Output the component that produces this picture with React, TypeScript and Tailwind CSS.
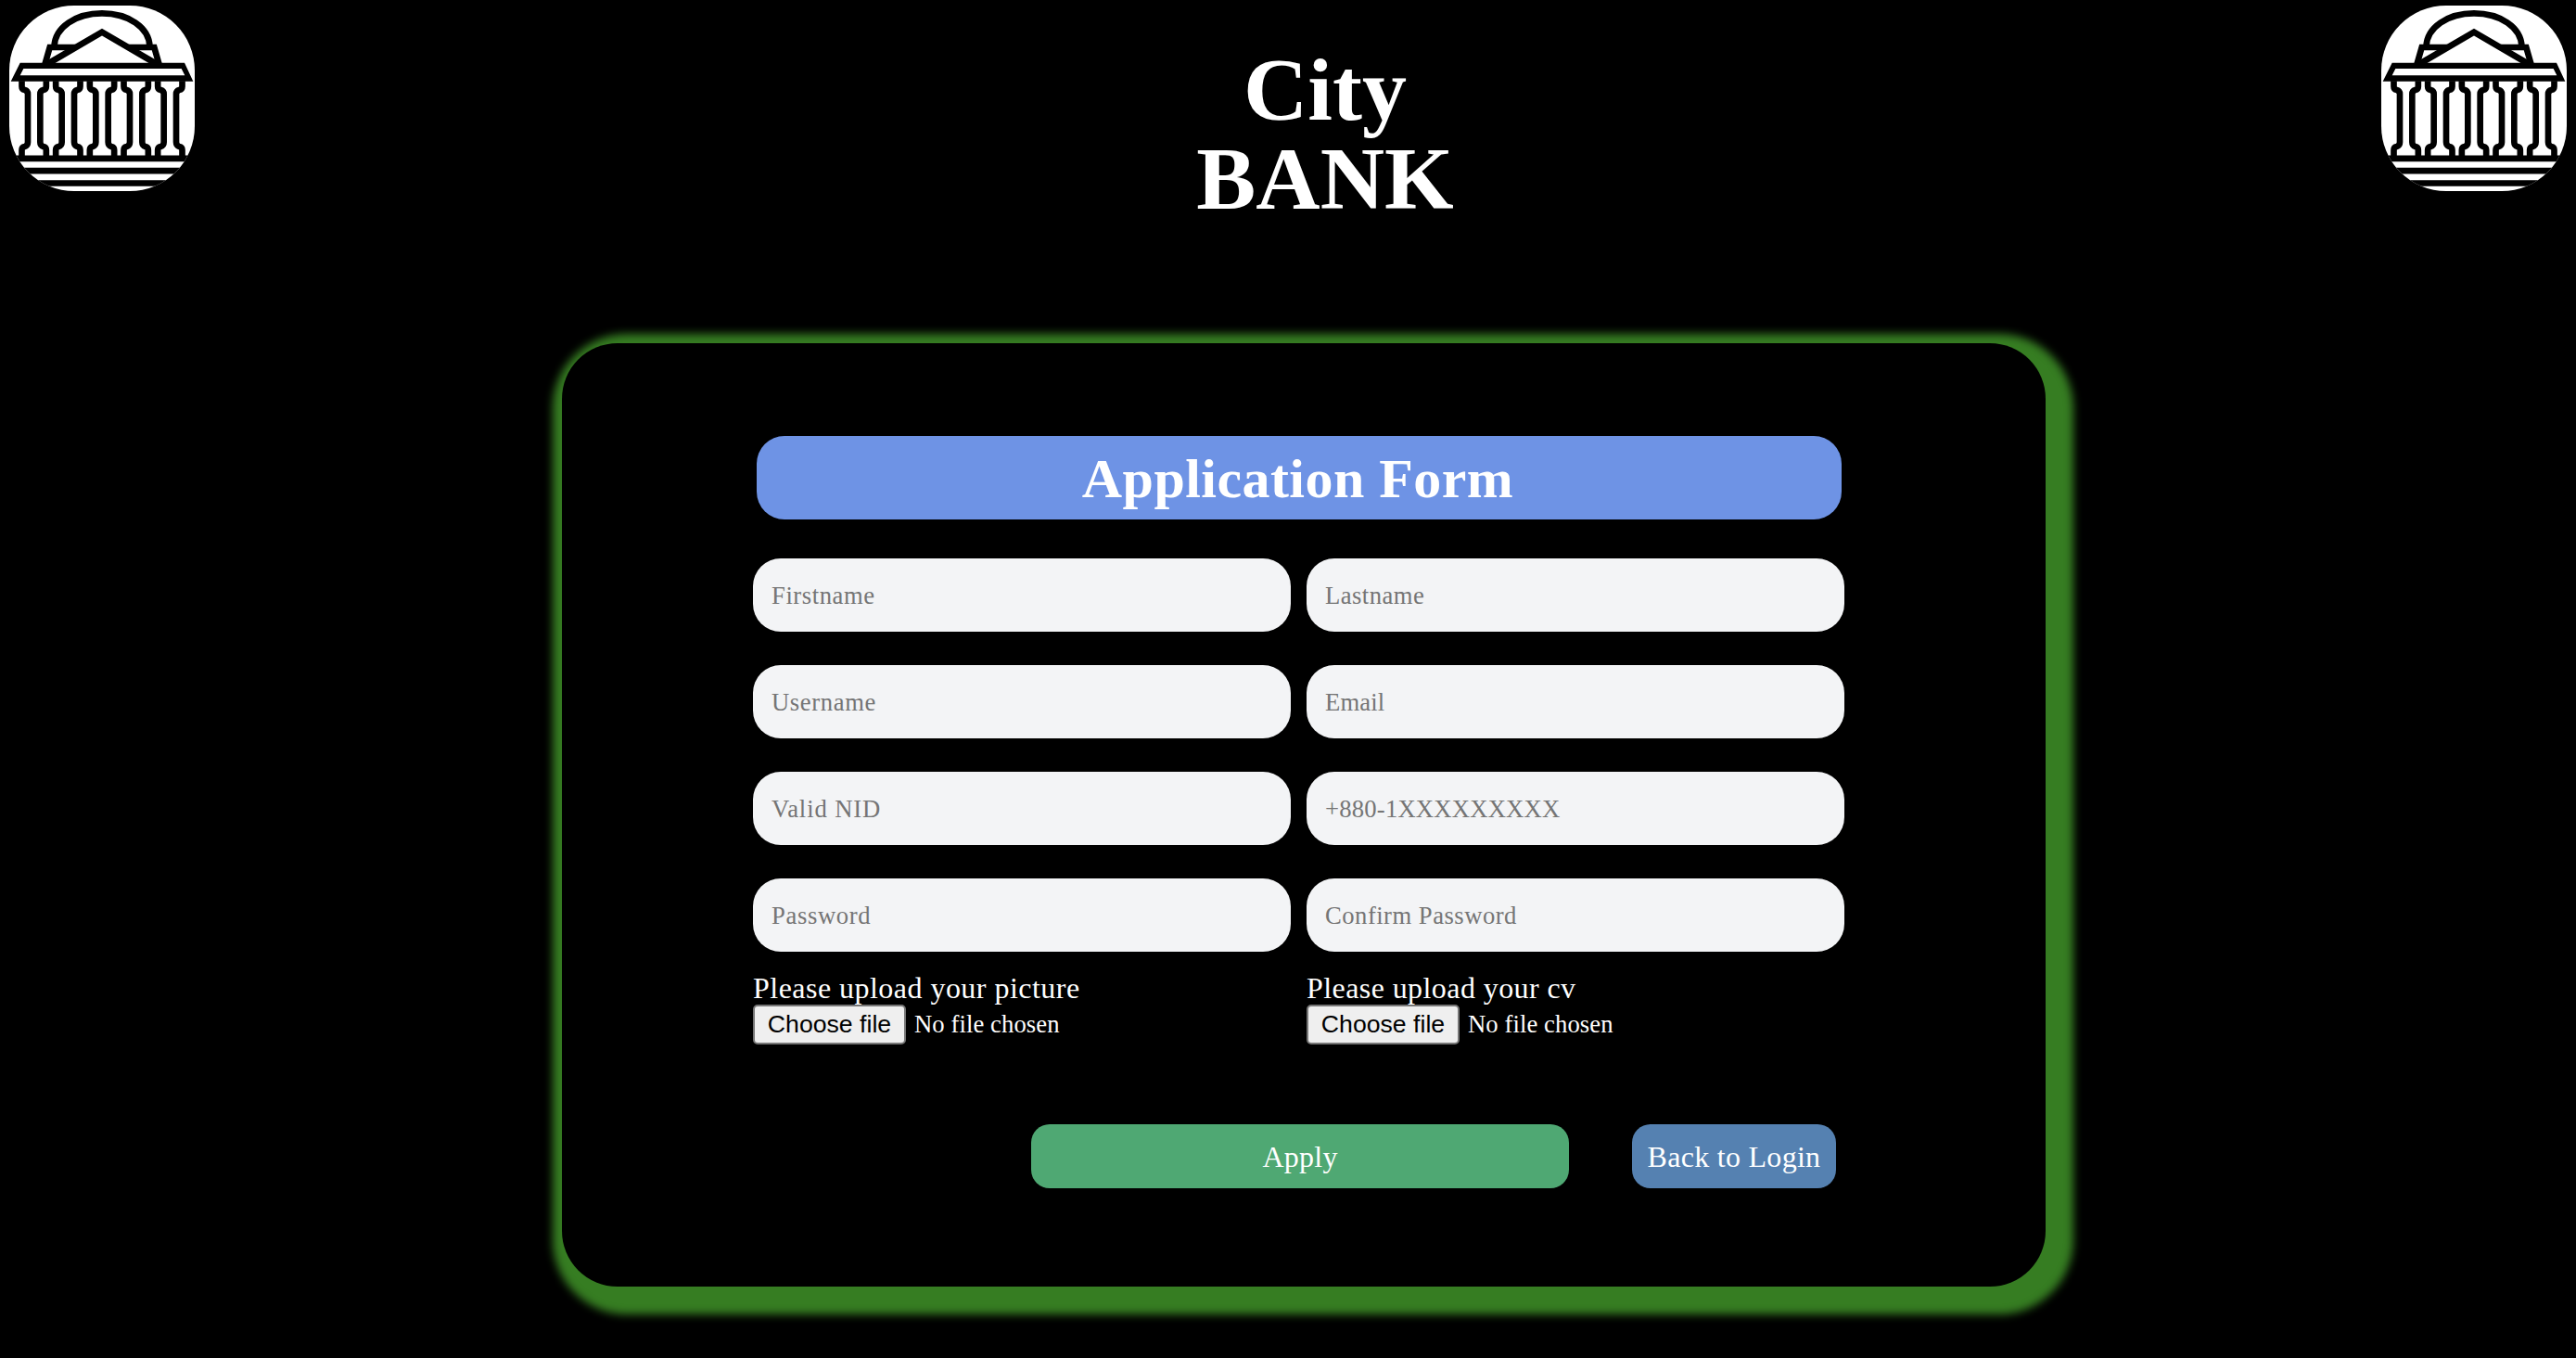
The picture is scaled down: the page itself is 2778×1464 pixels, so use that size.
import type { ReactNode } from "react";

const SERIF = "font-['Liberation_Serif',serif]";

function BankLogo() {
  return (
    <svg viewBox="0 0 600 600" className="block size-[200px] rounded-[70px] bg-white" aria-hidden="true">
      <g transform="translate(-30 -18)" fill="none" stroke="#000" strokeWidth="20">
        <path d="M175.500 150C178 88 245 43 330 43S482 88 484.500 150" />
        <path d="M244 153H161L143 216" />
        <path d="M416 153H499L517 216" />
        <path d="M148 210L330 103.5L512 210" />
        <path
          d="M65 203H597L625 263.500H35ZM76 222L65 244H598L587 222Z"
          fill="#000"
          fillRule="evenodd"
          stroke="none"
        />
        {[0, 110, 220, 330, 440].map((dx) => (
          <g key={dx} transform={`translate(${dx} 0)`}>
            <path d="M70.500 262V280C70.500 286 74 290 80 291C87 293 90 297 90 304V460C90 467 87 472 80 474C74 475 70.500 479 70.500 485V504" />
            <path d="M149.500 262V280C149.500 286 146 290 140 291C133 293 130 297 130 304V460C130 467 133 472 140 474C146 475 149.500 479 149.500 485V504" />
          </g>
        ))}
        <path d="M20 512.500H640M20 552.500H640M20 592.500H640" />
      </g>
    </svg>
  );
}

function Field({ placeholder, tracking, type = "text" }: { placeholder: string; tracking: string; type?: string }) {
  return (
    <input
      type={type}
      placeholder={placeholder}
      className={`h-[79px] w-full rounded-[30px] bg-[#f3f4f6] px-5 pt-[2px] text-[26.67px] text-black placeholder:text-[#757575] placeholder:opacity-100 ${tracking}`}
    />
  );
}

function Upload({ children }: { children: ReactNode }) {
  return (
    <div>
      <div className="pt-px text-[32px] leading-[36px] text-white">{children}</div>
      <div className="flex items-center">
        <button
          type="button"
          className="h-[43px] w-[165px] rounded-[5px] border-2 border-[#767676] bg-[#efefef] font-['Liberation_Sans',sans-serif] text-[26.67px] leading-none whitespace-nowrap text-black"
        >
          Choose file
        </button>
        <span className="ml-[9px] text-[26.67px] leading-[43px] tracking-[0.08px] text-white">No file chosen</span>
      </div>
    </div>
  );
}

export default function App() {
  return (
    <div className={`h-[1464px] w-full overflow-hidden bg-black ${SERIF}`}>
      <header className="flex h-[370px] items-start justify-between px-[10px] pt-[6px]">
        <BankLogo />
        <h1 className="ml-[80px] pt-[43px] text-center text-[96px] leading-[96px] font-bold text-white">
          City
          <br />
          BANK
        </h1>
        <BankLogo />
      </header>

      <main className="ml-[606px] h-[1017px] w-[1600px] rounded-[60px] bg-black pt-[100px] pl-[206px] shadow-[10px_10px_10px_20px_#367d22]">
        <form className="w-[1177px]">
          <h2 className="ml-1 h-[90px] w-[1170px] rounded-[30px] bg-[#6e93e5] pt-px pr-[3px] text-center text-[60px] leading-[90px] font-bold tracking-[0.44px] text-white">
            Application Form
          </h2>

          <div className="mt-[42px] grid grid-cols-[580px_580px] gap-x-[17px] gap-y-[36px]">
            <Field placeholder="Firstname" tracking="tracking-[0.56px]" />
            <Field placeholder="Lastname" tracking="tracking-[0.46px]" />
            <Field placeholder="Username" tracking="tracking-[0.61px]" />
            <Field placeholder="Email" tracking="tracking-[0.1px]" type="email" />
            <Field placeholder="Valid NID" tracking="tracking-[0.87px]" />
            <Field placeholder="+880-1XXXXXXXXX" tracking="tracking-[0.2px]" type="tel" />
            <Field placeholder="Password" tracking="tracking-[0.62px]" type="password" />
            <Field placeholder="Confirm Password" tracking="tracking-[0.48px]" type="password" />
          </div>

          <div className="mt-[20px] grid grid-cols-[580px_580px] gap-x-[17px]">
            <Upload>
              <span className="tracking-[0.47px]">Please upload your picture</span>
            </Upload>
            <Upload>
              <span className="tracking-[0.42px]">Please upload your cv</span>
            </Upload>
          </div>

          <div className="mt-[86px] ml-[300px] flex gap-[68px]">
            <button
              type="button"
              className="h-[69px] w-[580px] rounded-[20px] bg-[#4fa873] pt-px text-[32px] leading-[68px] tracking-[0.25px] text-white"
            >
              Apply
            </button>
            <button
              type="button"
              className="h-[69px] w-[220px] rounded-[20px] bg-[#5581b1] pt-px text-[32px] leading-[68px] tracking-[0.29px] whitespace-nowrap text-white"
            >
              Back to Login
            </button>
          </div>
        </form>
      </main>
    </div>
  );
}
